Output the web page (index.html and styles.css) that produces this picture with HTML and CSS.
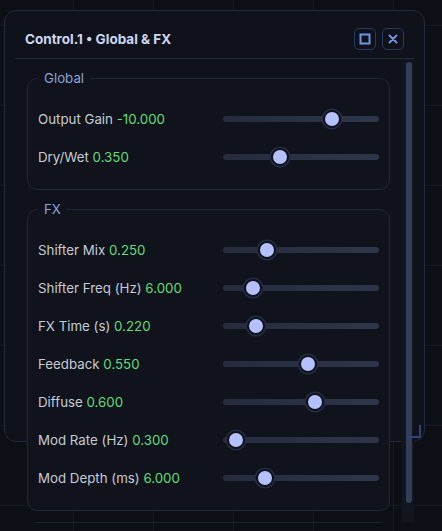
FILE: index.html
```html
<!DOCTYPE html>
<html lang="en">
<head>
<meta charset="utf-8">
<title>Control.1 • Global &amp; FX</title>
<link rel="stylesheet" href="styles.css">
</head>
<body>
<div class="window">
  <div class="header">
    <div class="title">Control.1 • Global &amp; FX</div>
    <div class="actions">
      <button class="btn" aria-label="Maximize">
        <svg width="12" height="12" viewBox="0 0 12 12"><rect x="1.5" y="1.5" width="9" height="9" fill="none" stroke="#6f95e2" stroke-width="2"/></svg>
      </button>
      <button class="btn" aria-label="Close">
        <svg width="10" height="10" viewBox="0 0 10 10"><path d="M1.5 1.5 L8.5 8.5 M8.5 1.5 L1.5 8.5" stroke="#6f95e2" stroke-width="2" stroke-linecap="round"/></svg>
      </button>
    </div>
  </div>
  <div class="pane">
    <div class="content">
      <fieldset class="group">
        <legend>Global</legend>
        <div class="row"><span class="label">Output Gain <span class="val">-10.000</span></span><input class="slider" type="range" min="-60" max="9" step="0.001" value="-10"></div>
        <div class="row"><span class="label">Dry/Wet <span class="val">0.350</span></span><input class="slider" type="range" min="0" max="1" step="0.001" value="0.35"></div>
      </fieldset>
      <fieldset class="group">
        <legend>FX</legend>
        <div class="row"><span class="label">Shifter Mix <span class="val">0.250</span></span><input class="slider" type="range" min="0" max="1" step="0.001" value="0.25"></div>
        <div class="row"><span class="label">Shifter Freq (Hz) <span class="val">6.000</span></span><input class="slider" type="range" min="0" max="40" step="0.001" value="6"></div>
        <div class="row"><span class="label">FX Time (s) <span class="val">0.220</span></span><input class="slider" type="range" min="0" max="1.28" step="0.001" value="0.22"></div>
        <div class="row"><span class="label">Feedback <span class="val">0.550</span></span><input class="slider" type="range" min="0" max="1" step="0.001" value="0.55"></div>
        <div class="row"><span class="label">Diffuse <span class="val">0.600</span></span><input class="slider" type="range" min="0" max="1" step="0.001" value="0.6"></div>
        <div class="row"><span class="label">Mod Rate (Hz) <span class="val">0.300</span></span><input class="slider" type="range" min="0.1" max="7" step="0.001" value="0.3"></div>
        <div class="row"><span class="label">Mod Depth (ms) <span class="val">6.000</span></span><input class="slider" type="range" min="0" max="25" step="0.001" value="6"></div>
      </fieldset>
      <div class="more"></div>
    </div>
    <div class="scrollbar"><div class="thumb"></div></div>
  </div>
  <div class="resize"></div>
</div>
</body>
</html>
```

FILE: styles.css
```css
* { box-sizing: border-box; }
html, body { height: 100%; }
body {
  margin: 0;
  padding: 10px 0 0 4px;
  overflow: hidden;
  font-family: Inter, "Noto Sans", "Liberation Sans", sans-serif;
  background-color: #0c0f16;
  background-image:
    linear-gradient(90deg, #151a24 1px, transparent 1px),
    linear-gradient(180deg, #151a24 1px, transparent 1px);
  background-size: 80px 80px;
  background-position: 73px 25px;
}
.window {
  position: relative;
  width: 421px;
  height: 432px;
  border: 1px solid #242a38;
  border-radius: 12px;
  background: #0f121a;
}
.header {
  margin: 0 10px;
  height: 48px;
  padding: 17px 10px 0 10px;
  border-bottom: 1px solid #232938;
  display: flex;
  justify-content: space-between;
  align-items: flex-start;
}
.title {
  font-size: 13.5px;
  font-weight: 700;
  line-height: 22px;
  color: #cdd8f4;
}
.actions { display: flex; gap: 6px; }
.btn {
  width: 22px;
  height: 22px;
  padding: 0;
  border: 1px solid #283a62;
  border-radius: 5px;
  background: #0f121a;
  display: flex;
  align-items: center;
  justify-content: center;
}
.pane {
  position: relative;
  z-index: 1;
  margin: 0 10px;
  height: 464px;
  display: flex;
  overflow: hidden;
}
.content {
  flex: 1;
  min-width: 0;
  padding: 11px 12px 0 12px;
}
.scrollbar {
  width: 12px;
  flex: none;
  background: #12151e;
  padding: 3px 2px 0 4px;
}
.thumb {
  height: 441px;
  border-radius: 3px;
  background: #353d58;
}
.group {
  margin: 0 0 11px;
  padding: 14px 10px 13px 10px;
  border: 1px solid #222837;
  border-radius: 10px;
  background: #10131b;
  min-width: 0;
}
legend {
  padding: 0 6px;
  font-size: 13.3px;
  line-height: 16px;
  color: #8aa3d9;
}
.row {
  height: 38px;
  display: flex;
  align-items: center;
  justify-content: space-between;
}
.label {
  font-size: 13.3px;
  color: #c6cbd5;
}
.val { color: #62de78; }
.slider {
  -webkit-appearance: none;
  appearance: none;
  margin: 0;
  width: 156px;
  height: 20px;
  background: transparent;
}
.slider::-webkit-slider-runnable-track {
  height: 6px;
  border-radius: 3px;
  background: linear-gradient(90deg, #262c3e, #2f364b);
}
.slider::-webkit-slider-thumb {
  -webkit-appearance: none;
  width: 18px;
  height: 18px;
  margin-top: -6px;
  border-radius: 50%;
  background: #b5c1ff;
  border: 2px solid #0e1118;
  box-shadow: 0 0 0 1.5px #252d44;
}
.more {
  height: 28px;
  border: 1px solid #1d2230;
  border-bottom: none;
  border-radius: 10px 10px 0 0;
  background: #12151e;
}
.resize {
  position: absolute;
  right: 3px;
  bottom: 3px;
  width: 13px;
  height: 13px;
  border-right: 2px solid #2e4474;
  border-bottom: 2px solid #2e4474;
  z-index: 2;
}
```
